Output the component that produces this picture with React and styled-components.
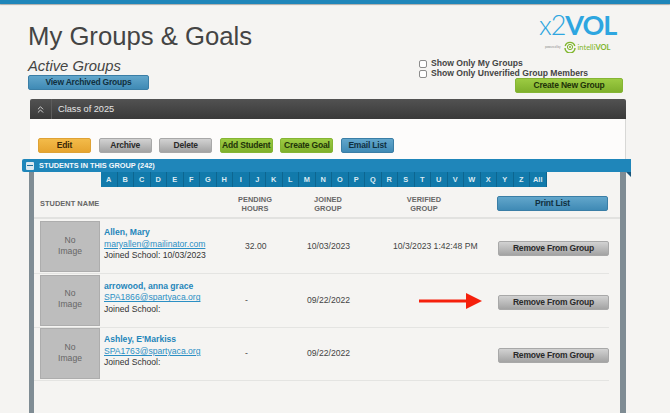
import React from 'react';
import styled, { createGlobalStyle, css } from 'styled-components';
import { ChevronsUp } from 'lucide-react';

const GlobalStyle = createGlobalStyle`
  html, body {
    margin: 0;
    height: 100%;
    overflow: hidden;
    background: #f5f4f2;
    font-family: "Liberation Sans", Arial, sans-serif;
  }
`;

const TopBar = styled.div`
  height: 4px;
  background: #1f86ba;
  box-shadow: 0 1px 1px rgb(0 0 0 / 30%);
`;

const Page = styled.div`
  width: 598px;
  padding-left: 28px;
`;

const Header = styled.header`
  display: flex;
  justify-content: space-between;
  height: 95px;
`;

const Heading = styled.div`
  padding-top: 17px;
`;

const Title = styled.h1`
  margin: 0;
  font-size: 25.7px;
  line-height: 30px;
  font-weight: 400;
  color: #444;
`;

const SubTitle = styled.h2`
  margin: 7px 0 1px;
  font-size: 14.8px;
  line-height: 16px;
  font-weight: 400;
  font-style: italic;
  color: #444;
`;

const variants = {
  blue: css`
    background: linear-gradient(#62a6cb, #3f8ab5);
    border-color: #3a7ea6;
    color: #10303f;
  `,
  green: css`
    background: linear-gradient(#9ccb42, #7fb02c);
    border-color: #85b534;
    color: #1e3208;
  `,
  orange: css`
    background: linear-gradient(#f3bb4a, #e6a42f);
    border-color: #dfa235;
    color: #3a2806;
  `,
  grey: css`
    background: linear-gradient(#d2d2d2, #a3a3a3);
    border-color: #a8a8a8;
    color: #2a2a2a;
  `,
};

const Button = styled.button`
  display: block;
  box-sizing: border-box;
  width: ${props => props.$width}px;
  height: 15px;
  padding: 0;
  border: 1px solid;
  border-radius: 2px;
  font-family: inherit;
  font-size: 8.5px;
  letter-spacing: -0.2px;
  font-weight: 700;
  line-height: 13px;
  text-align: center;
  white-space: nowrap;
  ${props => variants[props.$variant]}
`;

const Controls = styled.div`
  box-sizing: border-box;
  width: 204px;
  margin-right: 3px;
  display: flex;
  flex-direction: column;
`;

const Logo = styled.div`
  height: 54.5px;
  padding: 7px 0 0 120px;
  box-sizing: border-box;
  color: #2ea6e0;
`;

const LogoMark = styled.div`
  font-family: Lato, sans-serif;
  font-size: 27px;
  line-height: 28px;
  white-space: nowrap;
  letter-spacing: -1px;
`;

const LogoThin = styled.span`
  font-weight: 300;
`;

const LogoBold = styled.span`
  font-weight: 700;
`;

const Powered = styled.div`
  display: flex;
  align-items: center;
  gap: 2px;
  height: 12px;
  margin: 2px 0 0 6px;
  font-family: Lato, sans-serif;
  font-size: 7.5px;
  color: #7fb62c;
  white-space: nowrap;
`;

const PoweredBy = styled.span`
  font-size: 3px;
  color: #888;
  margin-right: 1px;
`;

const Filter = styled.label`
  display: flex;
  align-items: center;
  gap: 4px;
  height: 9.75px;
  font-size: 8.6px;
  font-weight: 700;
  color: #444;
  white-space: nowrap;
`;

const Check = styled.span`
  box-sizing: border-box;
  width: 8px;
  height: 8px;
  margin-top: 2px;
  background: #fff;
  border: 1px solid #8c8c8c;
  border-radius: 2px;
`;

const CreateRow = styled.div`
  display: flex;
  justify-content: flex-end;
`;

const Panel = styled.section`
  width: 596px;
  margin-left: 2px;
`;

const PanelHead = styled.div`
  display: flex;
  align-items: center;
  height: 20px;
  background: linear-gradient(#525252, #393939);
  border-radius: 2px 2px 0 0;
  color: #e6e6e6;
  font-size: 9.2px;
`;

const Collapse = styled.div`
  display: flex;
  align-items: center;
  justify-content: center;
  width: 21px;
  height: 100%;
  margin-right: 6px;
  border-right: 1px solid #5c5c5c;
`;

const PanelBody = styled.div`
  display: flex;
  gap: 7.6px;
  height: 40px;
  box-sizing: border-box;
  padding: 19px 0 0 8px;
  background: #fdfcfb;
  border-right: 1px solid #d8d8d6;
`;

const StudentsBar = styled.div`
  position: relative;
  display: flex;
  align-items: center;
  gap: 5px;
  height: 13px;
  margin: 0 -5px 0 -8px;
  padding-left: 4px;
  background: #1f86ba;
  border-radius: 2px 0 0 2px;
  color: #f4f8fa;
  font-size: 7.35px;
  font-weight: 700;

  &::after {
    content: "";
    position: absolute;
    right: 0;
    top: 13px;
    border-top: 5px solid #17557a;
    border-left: 5px solid transparent;
  }
`;

const MinusBox = styled.span`
  display: flex;
  align-items: center;
  justify-content: center;
  width: 8px;
  height: 8px;
  background: #dce9f0;
  border-radius: 1px;

  &::before {
    content: "";
    width: 6px;
    height: 1px;
    background: #1f6f9b;
  }
`;

const Sheet = styled.div`
  box-sizing: border-box;
  height: 260px;
  margin-left: -1px;
  background: #f5f4f2;
  border-left: 5px solid #7f8c94;
  border-right: 6px solid #7f8c94;
`;

const Alphabet = styled.nav`
  display: grid;
  grid-template-columns: repeat(27, 16.5px);
  height: 15px;
  margin-left: 67px;
`;

const Letter = styled.span`
  display: flex;
  align-items: center;
  justify-content: center;
  background: #127aab;
  border-right: 1px solid #0d6690;
  color: #dcebf3;
  font-size: 7.4px;
  font-weight: 700;
`;

const columns = '194px 54px 92px 100px 146px';

const TableHead = styled.div`
  display: grid;
  grid-template-columns: ${columns};
  align-items: center;
  height: 32px;
  box-sizing: border-box;
  padding: 7px 0 2px;
  border-bottom: 2px solid #e2e2e0;
`;

const HeadCell = styled.div`
  padding-left: ${props => props.$indent || 0}px;
  text-align: ${props => (props.$indent ? 'left' : 'center')};
  font-size: 7.4px;
  line-height: 8.7px;
  font-weight: 700;
  letter-spacing: 0.05px;
  color: #666;
`;

const Row = styled.div`
  display: grid;
  grid-template-columns: ${columns};
  align-items: center;
  box-sizing: border-box;
  height: ${props => (props.$first ? 55 : 53.5)}px;
  width: 575px;
  padding-top: ${props => (props.$first ? 1.5 : 0)}px;
  border-bottom: 1px solid #e4e4e2;
`;

const Student = styled.div`
  display: flex;
  gap: 4px;
  padding-left: 6px;
  height: 51px;
`;

const NoImage = styled.div`
  box-sizing: border-box;
  display: flex;
  align-items: center;
  justify-content: center;
  flex: none;
  width: 60px;
  height: 51px;
  padding: 0 18px 2px;
  background: #bdbdbd;
  border: 1px solid #adadad;
  color: #666;
  font-size: 8.6px;
  line-height: 11px;
  text-align: center;
`;

const Info = styled.div`
  padding-top: 6px;
  font-size: 8.6px;
  line-height: 11.6px;
  color: #333;
  white-space: nowrap;
`;

const Name = styled.div`
  font-weight: 700;
  color: #1f86ba;
`;

const Email = styled.a`
  display: block;
  color: #2b8fc4;
  text-decoration: underline;
`;

const Cell = styled.div`
  padding-left: ${props => props.$indent}px;
  padding-bottom: 1px;
  font-size: 8.6px;
  color: #444;
  white-space: nowrap;
`;

const ActionCell = styled.div`
  padding: ${props => props.$pad || '4px 0 0 24px'};
`;

const ArrowMark = styled.svg`
  display: block;
  margin-top: 2px;
`;

const Arrow = () => (
  <ArrowMark width="63" height="16" viewBox="0 0 63 16">
    <rect x="0" y="6.5" width="49" height="3" fill="#f5200c" />
    <polygon points="47,0 63,8 47,16" fill="#f5200c" />
  </ArrowMark>
);

const IntelliIcon = () => (
  <svg width="12" height="12" viewBox="0 0 12 12">
    <path d="M1.2 5 A5 5 0 0 1 10.8 5 M1 7 A5 5 0 0 0 11 7" fill="none" stroke="#7fb62c" strokeWidth="1.4" />
    <circle cx="6" cy="6" r="2.6" fill="none" stroke="#7fb62c" strokeWidth="1" />
    <circle cx="6" cy="6" r="1" fill="#7fb62c" />
  </svg>
);

const letters = [...'ABCDEFGHIJKLMNOPQRSTUVWXYZ', 'All'];

const actions = [
  ['Edit', 'orange'],
  ['Archive', 'grey'],
  ['Delete', 'grey'],
  ['Add Student', 'green'],
  ['Create Goal', 'green'],
  ['Email List', 'blue'],
];

const students = [
  { name: 'Allen, Mary', email: 'maryallen@mailinator.com', school: '10/03/2023', hours: '32.00', joined: '10/03/2023', verified: '10/3/2023 1:42:48 PM' },
  { name: 'arrowood, anna grace', email: 'SPA1866@spartyaca.org', school: '', hours: '-', joined: '09/22/2022', arrow: true },
  { name: "Ashley, E'Markiss", email: 'SPA1763@spartyaca.org', school: '', hours: '-', joined: '09/22/2022' },
];

const App = () => (
  <>
    <GlobalStyle />
    <TopBar />
    <Page>
      <Header>
        <Heading>
          <Title>My Groups &amp; Goals</Title>
          <SubTitle>Active Groups</SubTitle>
          <Button $variant="blue" $width={121}>View Archived Groups</Button>
        </Heading>
        <Controls>
          <Logo>
            <LogoMark><LogoThin>x2</LogoThin><LogoBold>VOL</LogoBold></LogoMark>
            <Powered>
              <PoweredBy>powered by</PoweredBy>
              <IntelliIcon />
              <span>intelli<b>VOL</b></span>
            </Powered>
          </Logo>
          <Filter><Check />Show Only My Groups</Filter>
          <Filter><Check />Show Only Unverified Group Members</Filter>
          <CreateRow>
            <Button $variant="green" $width={108}>Create New Group</Button>
          </CreateRow>
        </Controls>
      </Header>
      <Panel>
        <PanelHead>
          <Collapse><ChevronsUp size={11} color="#ddd" strokeWidth={2} /></Collapse>
          Class of 2025
        </PanelHead>
        <PanelBody>
          {actions.map(([label, variant]) => (
            <Button key={label} $variant={variant} $width={53}>{label}</Button>
          ))}
        </PanelBody>
        <StudentsBar>
          <MinusBox />
          STUDENTS IN THIS GROUP (242)
        </StudentsBar>
        <Sheet>
          <Alphabet>
            {letters.map(l => <Letter key={l}>{l}</Letter>)}
          </Alphabet>
          <TableHead>
            <HeadCell $indent={6}>STUDENT NAME</HeadCell>
            <HeadCell>PENDING<br />HOURS</HeadCell>
            <HeadCell>JOINED<br />GROUP</HeadCell>
            <HeadCell>VERIFIED<br />GROUP</HeadCell>
            <ActionCell $pad="0 0 2px 23px">
              <Button $variant="blue" $width={111}>Print List</Button>
            </ActionCell>
          </TableHead>
          {students.map((s, i) => (
            <Row key={s.email} $first={i === 0}>
              <Student>
                <NoImage>No Image</NoImage>
                <Info>
                  <Name>{s.name}</Name>
                  <Email>{s.email}</Email>
                  Joined School: {s.school}
                </Info>
              </Student>
              <Cell $indent={17}>{s.hours}</Cell>
              <Cell $indent={25}>{s.joined}</Cell>
              {s.arrow
                ? <Cell $indent={45}><Arrow /></Cell>
                : <Cell $indent={19}>{s.verified}</Cell>}
              <ActionCell>
                <Button $variant="grey" $width={111}>Remove From Group</Button>
              </ActionCell>
            </Row>
          ))}
        </Sheet>
      </Panel>
    </Page>
  </>
);

export default App;
